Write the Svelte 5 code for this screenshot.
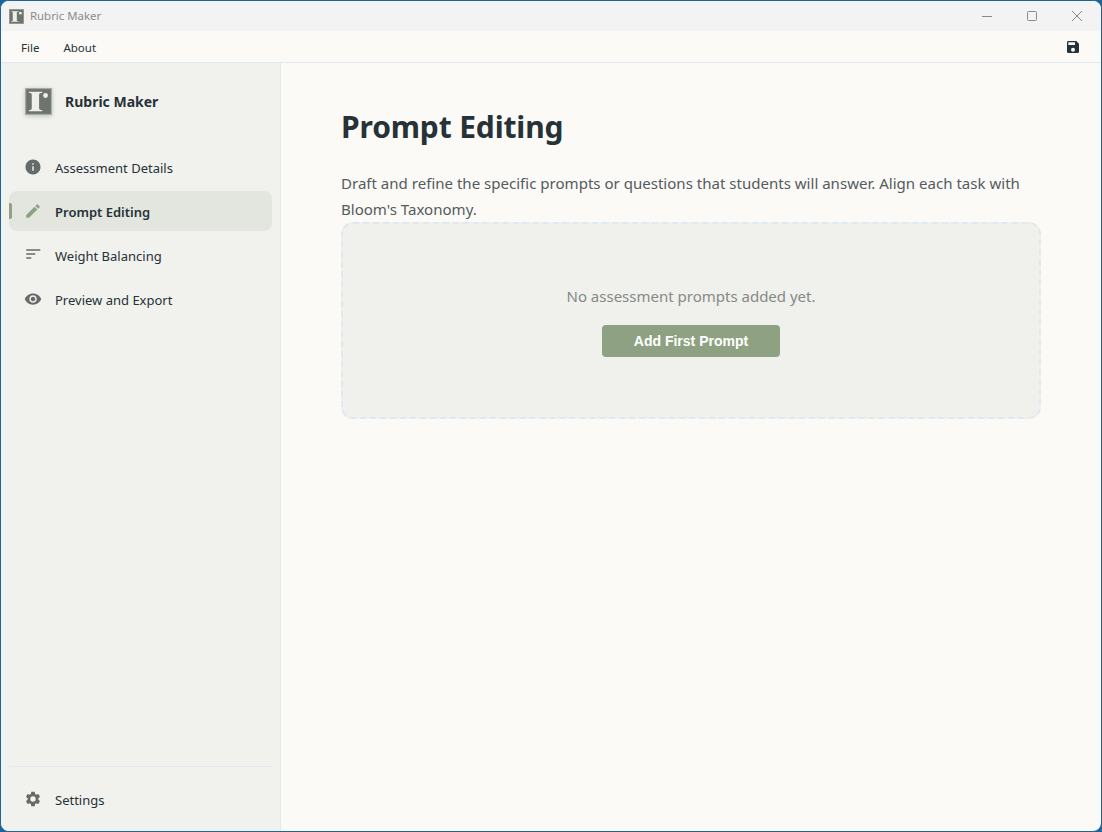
<script>
  const navItems = [
    { label: "Assessment Details", icon: "info" },
    { label: "Prompt Editing", icon: "edit", active: true },
    { label: "Weight Balancing", icon: "sort" },
    { label: "Preview and Export", icon: "eye" },
  ];

  const paths = {
    info: "M12 2C6.48 2 2 6.48 2 12s4.48 10 10 10 10-4.48 10-10S17.52 2 12 2zm1 15h-2v-6h2v6zm0-8h-2V7h2v2z",
    edit: "M3 17.25V21h3.75L17.81 9.94l-3.75-3.75L3 17.25zM20.71 7.04a1 1 0 0 0 0-1.41l-2.34-2.34a1 1 0 0 0-1.41 0l-1.83 1.83 3.75 3.75 1.83-1.83z",
    sort: "M3 4.4h18.7v1.8H3zM3 9.8h12v1.8H3zM3 15.1h6.7v1.8H3z",
    eye: "M12 4.5C7 4.5 2.73 7.61 1 12c1.73 4.39 6 7.5 11 7.5s9.27-3.11 11-7.5c-1.73-4.39-6-7.5-11-7.5zM12 17c-2.76 0-5-2.24-5-5s2.24-5 5-5 5 2.24 5 5-2.24 5-5 5zm0-8c-1.66 0-3 1.34-3 3s1.34 3 3 3 3-1.34 3-3-1.34-3-3-3z",
    gear: "M19.14 12.94c.04-.3.06-.61.06-.94 0-.32-.02-.64-.07-.94l2.03-1.58a.49.49 0 0 0 .12-.61l-1.92-3.32a.49.49 0 0 0-.59-.22l-2.39.96a7 7 0 0 0-1.62-.94l-.36-2.54a.48.48 0 0 0-.48-.41h-3.84a.48.48 0 0 0-.47.41l-.36 2.54c-.59.24-1.13.57-1.62.94l-2.39-.96a.49.49 0 0 0-.59.22L2.74 8.87a.48.48 0 0 0 .12.61l2.03 1.58c-.05.3-.09.63-.09.94s.02.64.07.94l-2.03 1.58a.49.49 0 0 0-.12.61l1.92 3.32c.12.22.37.29.59.22l2.39-.96c.5.38 1.03.7 1.62.94l.36 2.54c.05.24.24.41.48.41h3.84c.24 0 .44-.17.47-.41l.36-2.54c.59-.24 1.13-.56 1.62-.94l2.39.96c.22.08.47 0 .59-.22l1.92-3.32a.47.47 0 0 0-.12-.61l-2.01-1.58zM12 15.6A3.6 3.6 0 1 1 12 8.4a3.6 3.6 0 0 1 0 7.2z",
    save: "M17 3H5a2 2 0 0 0-2 2v14a2 2 0 0 0 2 2h14a2 2 0 0 0 2-2V7l-4-4zm-5 16a3 3 0 1 1 0-6 3 3 0 0 1 0 6zm3-10H5V5h10v4z",
  };
</script>

{#snippet logo(size)}
  <svg class="logo" width={size} height={size} viewBox="0 0 28 28">
    <rect width="28" height="28" fill="#a3ad9b" />
    <rect x="1.2" y="1.2" width="25.6" height="25.6" fill="#6f736e" />
    <path d="M4 4h14v1c-2 .2-3.4.6-3.4 2v14c0 1.4 1.400 1.800 3.400 2v1H4v-1c2-.2 3-.6 3-2V7c0-1.400-1-1.800-3-2z" fill="#eeeeea" />
    <circle cx="21.300" cy="7.800" r="2.500" fill="#eeeeea" />
  </svg>
{/snippet}

<div class="window">
  <header class="titlebar">
    {@render logo(15)}
    <span class="title">Rubric Maker</span>
    <div class="controls">
      <svg width="45" height="30" viewBox="0 0 45 30"><path d="M17 15.500h10" stroke="#8a8a8a" fill="none" /></svg>
      <svg width="45" height="30" viewBox="0 0 45 30"><rect x="17.500" y="10.500" width="9" height="9" rx="1" stroke="#8a8a8a" fill="none" /></svg>
      <svg width="46" height="30" viewBox="0 0 46 30"><path d="M17 10l10 10M27 10l-10 10" stroke="#8a8a8a" fill="none" /></svg>
    </div>
  </header>

  <div class="menubar">
    <span class="menu-item">File</span>
    <span class="menu-item">About</span>
    <svg class="save" width="16" height="16" viewBox="0 0 24 24"><path d={paths.save} fill="#263238" /></svg>
  </div>

  <div class="body">
    <aside class="sidebar">
      <div class="brand">
        {@render logo(27)}
        <span>Rubric Maker</span>
      </div>
      <nav>
        {#each navItems as item}
          <div class="nav-item" class:active={item.active}>
            <svg width="18" height="18" viewBox="0 0 24 24"><path d={paths[item.icon]} /></svg>
            <span>{item.label}</span>
          </div>
        {/each}
      </nav>
      <div class="sidebar-foot">
        <div class="nav-item">
          <svg width="18" height="18" viewBox="0 0 24 24"><path d={paths.gear} /></svg>
          <span>Settings</span>
        </div>
      </div>
    </aside>

    <main>
      <h1>Prompt Editing</h1>
      <p class="lead">Draft and refine the specific prompts or questions that students will answer. Align each task with Bloom's Taxonomy.</p>
      <div class="empty">
        <p>No assessment prompts added yet.</p>
        <button>Add First Prompt</button>
      </div>
    </main>
  </div>
</div>

<style>
  :global(body) {
    background: #1b659f;
  }
  .window {
    box-sizing: border-box;
    width: 1102px;
    height: 832px;
    display: flex;
    flex-direction: column;
    border: 1px solid #1b659f;
    border-radius: 9px;
    overflow: hidden;
    background: #fbfaf6;
    font-family: "Noto Sans", "Open Sans", sans-serif;
    color: #263238;
  }
  .titlebar {
    height: 30px;
    flex: none;
    display: flex;
    align-items: center;
    padding-left: 8px;
    gap: 6px;
    background: #f3f3f3;
  }
  .title {
    font-size: 11.4px;
    color: #8b8b8b;
    margin-top: -1px;
  }
  .controls {
    margin-left: auto;
    display: flex;
  }
  .controls svg {
    display: block;
  }
  .menubar {
    box-sizing: border-box;
    height: 32px;
    flex: none;
    display: flex;
    align-items: center;
    gap: 24px;
    padding: 0 20px;
    border-bottom: 1px solid #e0e8f0;
  }
  .menu-item {
    font-size: 11.5px;
    padding-top: 2px;
  }
  .save {
    margin-left: auto;
  }
  .body {
    flex: 1;
    display: flex;
    min-height: 0;
  }
  .sidebar {
    box-sizing: border-box;
    width: 280px;
    flex: none;
    display: flex;
    flex-direction: column;
    padding: 0 8px;
    background: #f1f1ed;
    border-right: 1px solid #e0e8f0;
  }
  .brand {
    display: flex;
    align-items: center;
    gap: 13px;
    height: 76px;
    padding-left: 16px;
    font-size: 14px;
    font-weight: 700;
  }
  .brand .logo {
    filter: drop-shadow(0 1px 2px rgba(0, 0, 0, 0.2));
  }
  .logo {
    flex: none;
  }
  nav {
    display: flex;
    flex-direction: column;
    gap: 4px;
    margin-top: 8px;
  }
  .nav-item {
    position: relative;
    height: 40px;
    display: flex;
    align-items: center;
    gap: 13px;
    padding-left: 15px;
    border-radius: 8px;
    font-size: 13px;
  }
  .nav-item span {
    padding-top: 2px;
  }
  .nav-item svg {
    fill: #666a6a;
    flex: none;
  }
  .nav-item.active {
    background: #e3e5df;
    font-weight: 600;
  }
  .nav-item.active svg {
    fill: #8ea283;
  }
  .nav-item.active::before {
    content: "";
    position: absolute;
    left: 0;
    top: 12px;
    width: 3px;
    height: 16px;
    background: #8ea283;
    border-radius: 0 2px 2px 0;
  }
  .sidebar-foot {
    margin-top: auto;
    border-top: 1px solid #e0e8f0;
    padding: 12px 0 12px;
  }
  main {
    flex: 1;
    padding: 44px 60px;
    min-width: 0;
  }
  h1 {
    margin: 0;
    font-size: 30px;
    letter-spacing: -0.15px;
    line-height: 40px;
    font-weight: 700;
  }
  .lead {
    margin: 24px 0 0;
    max-width: 700px;
    font-size: 15.05px;
    line-height: 25.6px;
    color: #555b5e;
  }
  .empty {
    box-sizing: border-box;
    width: 700px;
    height: 197px;
    display: flex;
    flex-direction: column;
    align-items: center;
    justify-content: center;
    gap: 19px;
    padding-top: 1px;
    background: #f0f0ec;
    border: 2px dashed #e0e8f0;
    border-radius: 12px;
  }
  .empty p {
    margin: 0;
    font-size: 15px;
    color: #858a88;
  }
  button {
    width: 178px;
    height: 32px;
    border: none;
    border-radius: 4px;
    background: #8ea283;
    color: #ffffff;
    font-family: "Liberation Sans", Arial, sans-serif;
    font-size: 14px;
    font-weight: 700;
  }
</style>
